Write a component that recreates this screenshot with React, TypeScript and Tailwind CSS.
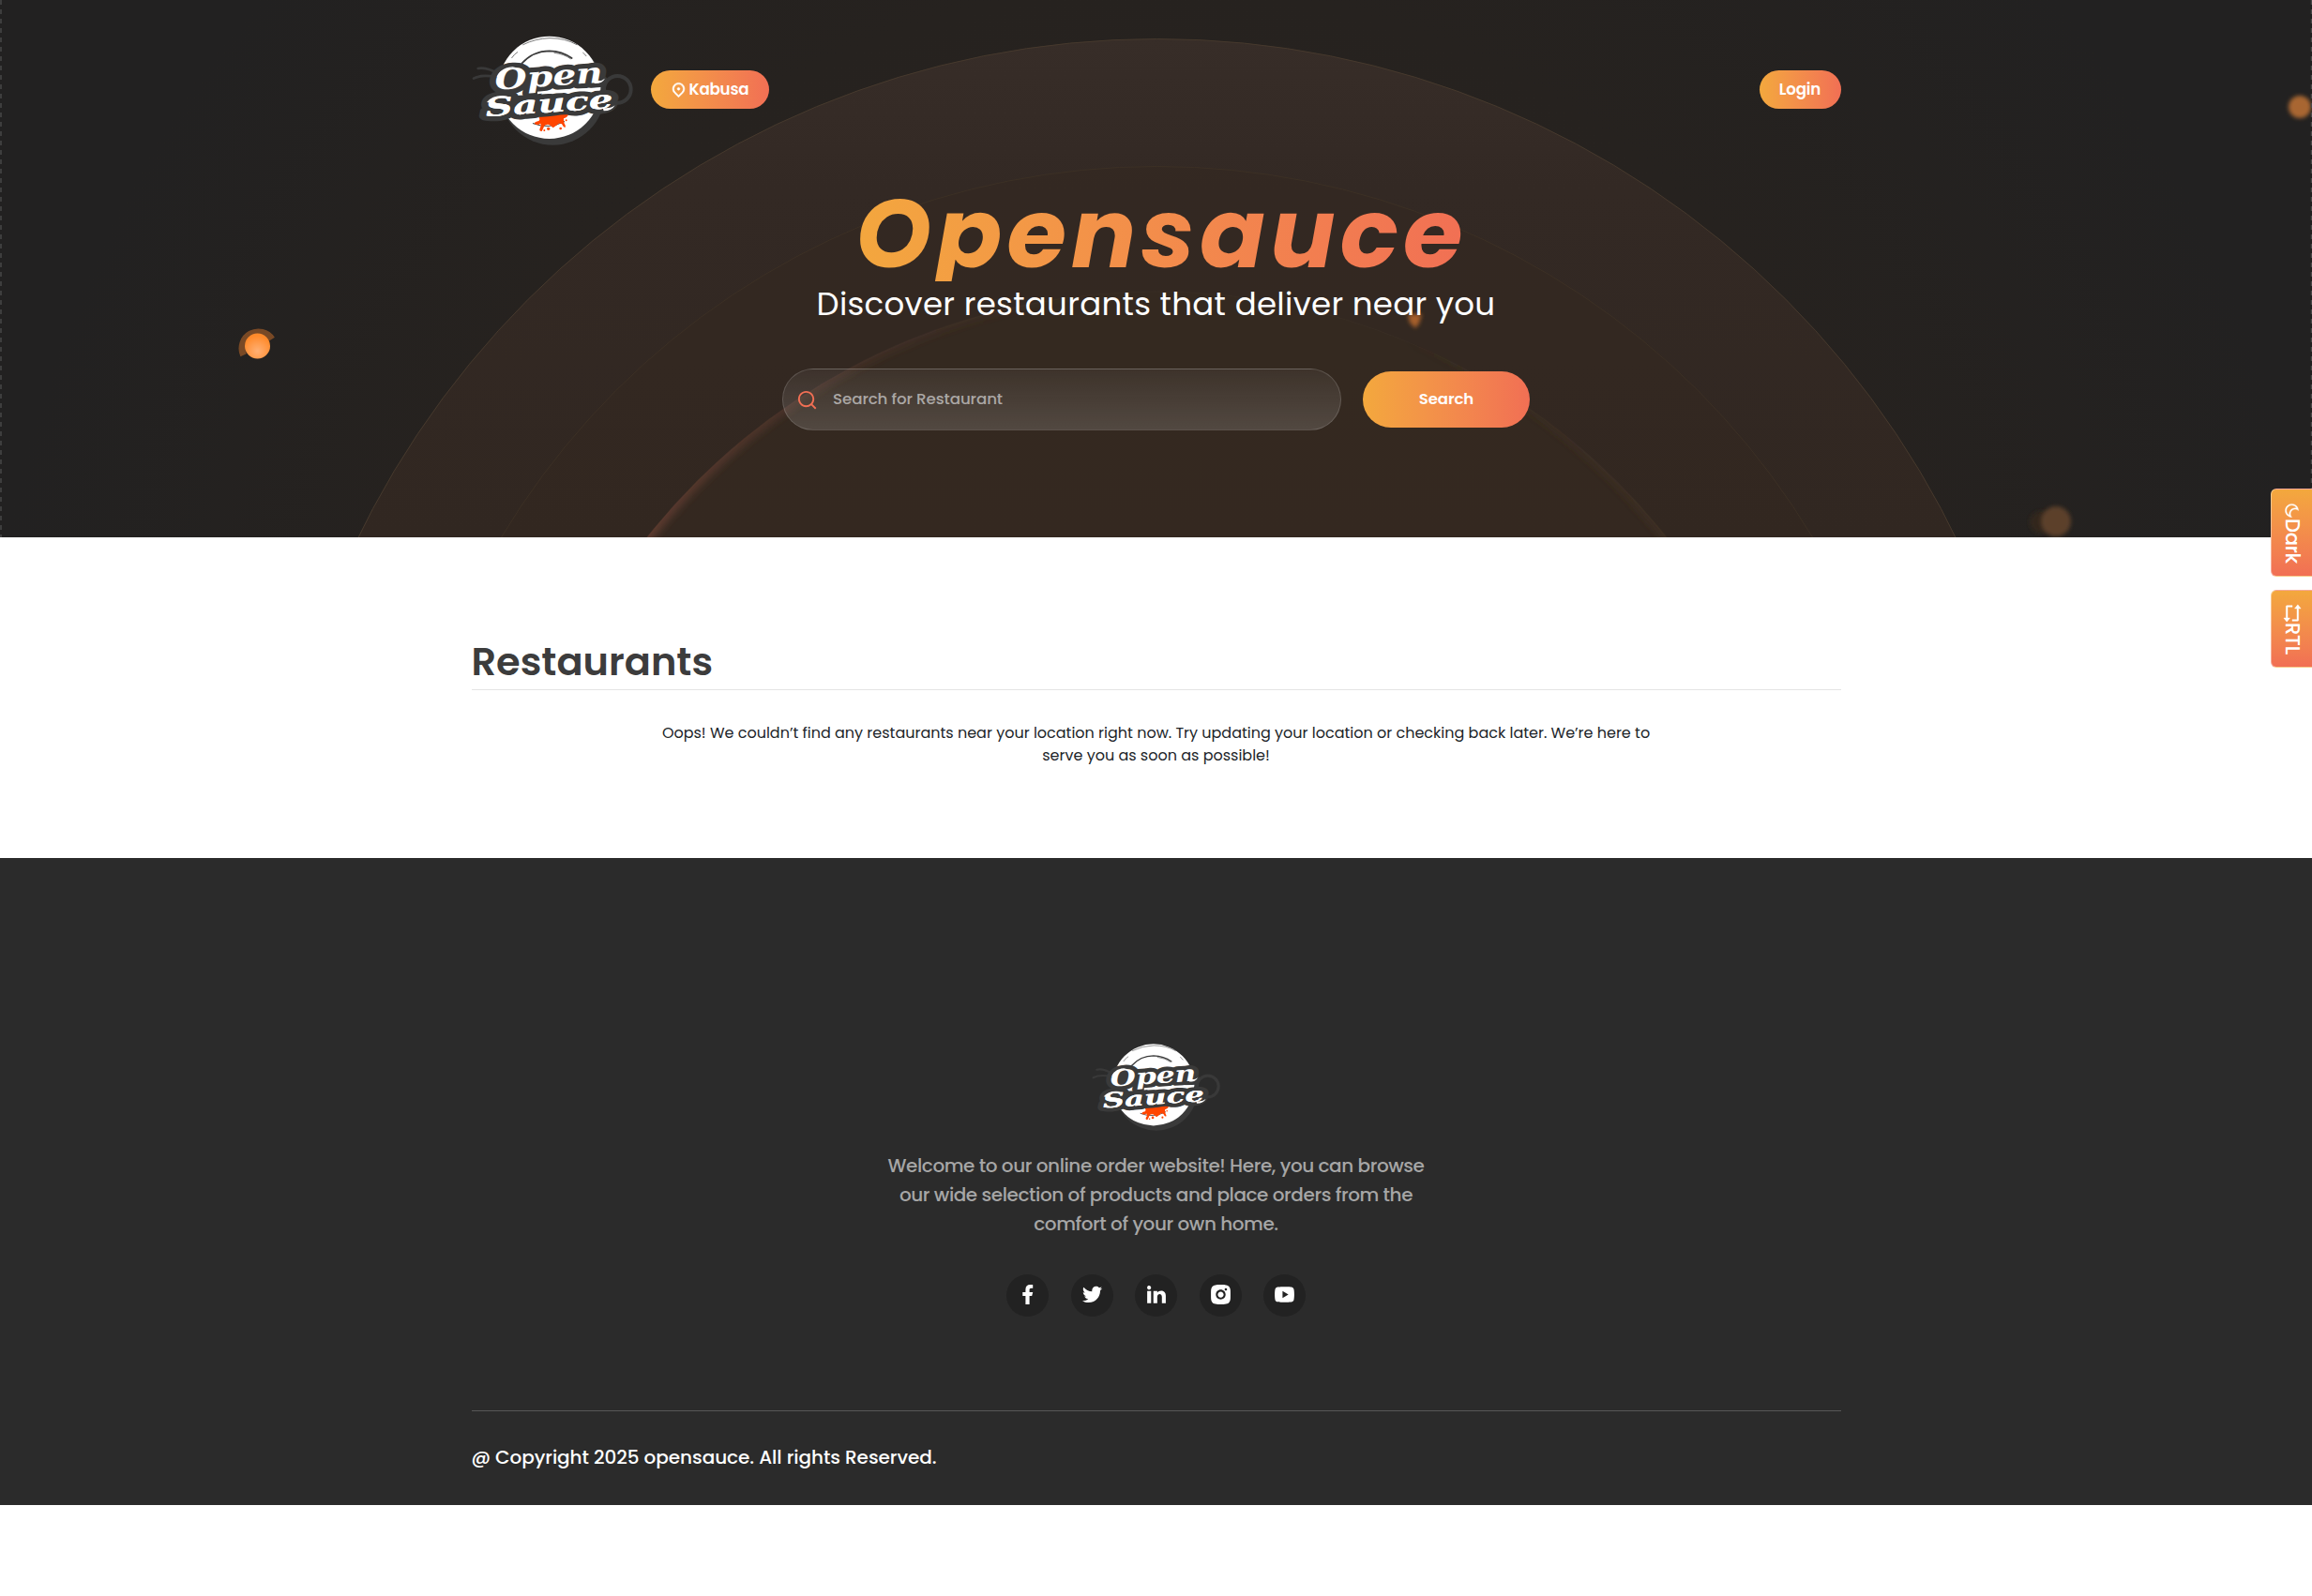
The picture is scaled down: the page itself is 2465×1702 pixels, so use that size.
import {
  RiFacebookFill,
  RiInstagramFill,
  RiLinkedinFill,
  RiMapPin2Line,
  RiMoonLine,
  RiRepeatLine,
  RiSearchLine,
  RiTwitterFill,
  RiYoutubeFill,
} from "react-icons/ri";

const socials = [
  { name: "Facebook", Icon: RiFacebookFill },
  { name: "Twitter", Icon: RiTwitterFill },
  { name: "LinkedIn", Icon: RiLinkedinFill },
  { name: "Instagram", Icon: RiInstagramFill },
  { name: "YouTube", Icon: RiYoutubeFill },
];

function Logo({ className }: { className: string }) {
  return (
    <svg viewBox="36 50 516 354" className={className} role="img" aria-label="Open Sauce">
      <circle cx="295" cy="236" r="167" fill="#3a3a3a" />
      <g fill="none" stroke="#393939" strokeLinecap="round">
        <circle cx="502" cy="225" r="43" strokeWidth="12" />
        <path d="M56 158 Q84 152 122 176" strokeWidth="8" />
        <path d="M42 190 Q70 176 112 186" strokeWidth="8" />
      </g>
      <circle cx="284" cy="219" r="164" fill="#fff" />
      <g fill="none" stroke="#3a3a3a" strokeLinecap="round">
        <path d="M196 142 Q232 102 284 102 Q325 103 356 125" strokeWidth="5" />
        <path d="M300 108 Q332 112 352 127" strokeWidth="2" />
        <path d="M200 82 Q240 62 285 61 Q335 61 372 82" strokeWidth="2" />
        <path d="M164 124 Q172 112 182 106" strokeWidth="2" />
        <path d="M392 108 Q400 114 402 118" strokeWidth="2" />
        <path d="M232 334 Q282 354 332 328" strokeWidth="3" />
      </g>
      <g
        fontFamily="'DejaVu Serif', 'Liberation Serif', serif"
        fontWeight="700"
        fontStyle="italic"
        strokeLinejoin="round"
      >
        <g fill="#3a3a3a" stroke="#3a3a3a" strokeWidth="30">
          <path d="M130 190 L150 162 L180 190 L440 165 L445 190 L200 212 Z" />
          <path d="M92 300 L96 262 L455 250 L478 276 L330 292 Z" />
        </g>
        <g fill="#fff" stroke="#3a3a3a" strokeWidth="32" paintOrder="stroke">
          <text x="82" y="312" fontSize="82" textLength="408" lengthAdjust="spacingAndGlyphs" transform="rotate(-4 82 312)">
            Sauce
          </text>
          <text x="112" y="226" fontSize="90" textLength="346" lengthAdjust="spacingAndGlyphs" transform="rotate(-4 112 226)">
            Open
          </text>
        </g>
        <g fill="#fff">
          <text x="82" y="312" fontSize="82" textLength="408" lengthAdjust="spacingAndGlyphs" transform="rotate(-4 82 312)" aria-hidden="true">
            Sauce
          </text>
        </g>
        <path d="M246 232 Q330 221 446 220 L446 229 Q340 226 246 240 Z" fill="#fff" />
        <path d="M116 184 Q130 152 176 152 Q140 160 128 190 Z" fill="#fff" />
        <path d="M84 266 Q104 240 150 246 Q112 250 98 268 Z" fill="#fff" />
        <path d="M425 196 Q448 202 462 190 Q452 208 428 206 Z" fill="#fff" />
        <path d="M455 284 Q480 288 494 276 Q484 294 458 294 Z" fill="#fff" />
      </g>
      <path
        d="M250 314 Q282 312 306 309 Q326 304 344 306 Q344 314 330 318 Q330 328 332 334 Q338 342 334 347 Q328 345 324 336 Q314 330 310 338 Q302 344 296 348 Q290 342 284 338 Q272 336 268 342 Q264 352 260 359 Q250 359 254 350 Q260 342 256 334 Q246 342 236 334 Q238 328 250 326 Q256 322 250 314 Z"
        fill="#ff4500"
      />
      <g fill="#ff4500">
        <circle cx="281" cy="351" r="5" />
        <circle cx="268" cy="356" r="3" />
        <circle cx="320" cy="350" r="4" />
        <circle cx="338" cy="324" r="3" />
      </g>
    </svg>
  );
}

function HeroBackdrop() {
  return (
    <svg viewBox="0 0 2465 573" className="absolute inset-0 h-full w-full" aria-hidden="true">
      <defs>
        <radialGradient id="base" gradientUnits="userSpaceOnUse" cx="1233" cy="800" r="1250">
          <stop offset="0" stopColor="#2c2420" />
          <stop offset="0.65" stopColor="#26221f" />
          <stop offset="1" stopColor="#222121" />
        </radialGradient>
        <linearGradient id="disc" gradientUnits="userSpaceOnUse" x1="0" y1="42" x2="0" y2="573">
          <stop offset="0" stopColor="#372d28" />
          <stop offset="0.3" stopColor="#332924" />
          <stop offset="1" stopColor="#312721" />
        </linearGradient>
        <linearGradient id="rimLeft" gradientUnits="userSpaceOnUse" x1="690" y1="573" x2="1180" y2="310">
          <stop offset="0" stopColor="#7c483a" stopOpacity="0.6" />
          <stop offset="0.6" stopColor="#5e3b30" stopOpacity="0.25" />
          <stop offset="1" stopColor="#5e3b30" stopOpacity="0" />
        </linearGradient>
        <linearGradient id="rimRight" gradientUnits="userSpaceOnUse" x1="1775" y1="573" x2="1500" y2="350">
          <stop offset="0" stopColor="#453525" stopOpacity="0.6" />
          <stop offset="1" stopColor="#453525" stopOpacity="0" />
        </linearGradient>
        <radialGradient id="ember" cx="0.5" cy="0.7" r="0.6">
          <stop offset="0" stopColor="#ffb074" />
          <stop offset="1" stopColor="#ff8a2b" />
        </radialGradient>
        <filter id="soft2" x="-50%" y="-50%" width="200%" height="200%">
          <feGaussianBlur stdDeviation="2" />
        </filter>
        <filter id="soft4" x="-20%" y="-20%" width="140%" height="140%">
          <feGaussianBlur stdDeviation="4" />
        </filter>
        <clipPath id="inner">
          <circle cx="1233.5" cy="1004" r="694" />
        </clipPath>
      </defs>
      <rect width="2465" height="573" fill="url(#base)" />
      <circle cx="1233.5" cy="989.5" r="948" fill="url(#disc)" stroke="#46392d" strokeWidth="1" />
      <circle cx="1233.5" cy="993" r="815.5" fill="#332820" fillOpacity="0.5" stroke="#3c3025" strokeWidth="1" />
      <circle cx="1233.5" cy="1004" r="693" fill="#352920" fillOpacity="0.5" stroke="#382d24" strokeWidth="1" />
      <g clipPath="url(#inner)">
        <path d="M539.5 1004 A694 694 0 0 1 1233.5 310" fill="none" stroke="url(#rimLeft)" strokeWidth="12" filter="url(#soft4)" />
        <path d="M1233.5 310 A694 694 0 0 1 1927.5 1004" fill="none" stroke="url(#rimRight)" strokeWidth="10" filter="url(#soft4)" />
      </g>
      <path d="M259.6 378.7 A17.5 17.5 0 0 1 290 361.6" fill="none" stroke="#a85f28" strokeOpacity="0.65" strokeWidth="7" />
      <circle cx="274.5" cy="369" r="13.5" fill="url(#ember)" />
      <circle cx="2452" cy="114" r="12" fill="#a86631" filter="url(#soft2)" />
      <path d="M1501 335 H1516 L1513 345 L1509 350 L1503 344 Z" fill="#a55f29" filter="url(#soft2)" />
      <circle cx="2176" cy="557" r="12" fill="#32271f" filter="url(#soft2)" />
      <circle cx="2192" cy="556" r="16" fill="#5c3f2a" filter="url(#soft2)" />
      <path d="M1 0V573 M2464.5 0V573" stroke="#484848" strokeWidth="1.5" strokeDasharray="5 5" />
    </svg>
  );
}

export default function App() {
  return (
    <div className="min-h-[1702px] bg-white font-['Poppins','Inter',sans-serif]">
      <section className="relative h-[573px] overflow-hidden">
        <HeroBackdrop />
        <div className="relative mx-auto w-[1460px]">
          <header className="flex h-[191px] items-center justify-between">
            <div className="flex items-center gap-[19px]">
              <Logo className="h-[118px] w-[172px]" />
              <button className="flex h-[41px] w-[126px] items-center justify-center gap-[3px] rounded-full bg-linear-to-r from-[#f3a83d] to-[#f16f54] text-[16.7px] font-semibold tracking-[-0.2px] text-white">
                <RiMapPin2Line className="size-[17px]" strokeWidth="0.8" />
                Kabusa
              </button>
            </div>
            <button className="h-[41px] w-[87px] rounded-full bg-linear-to-r from-[#f3a83d] to-[#f16f54] text-[16.7px] font-semibold tracking-[-0.2px] text-white">
              Login
            </button>
          </header>
          <div className="mt-[7px] flex flex-col items-center">
            <h1 className="bg-linear-to-r from-[#f3a83d] to-[#f16f54] bg-clip-text pr-0.5 pl-3.5 text-[103px] leading-[102px] font-bold tracking-[5.1px] text-transparent italic">
              Opensauce
            </h1>
            <p className="text-[34px] leading-[49px] tracking-[0.3px] text-white">
              Discover restaurants that deliver near you
            </p>
            <form className="mt-[44px] flex items-center gap-[23px]">
              <label className="flex h-[66px] w-[596px] items-center rounded-full border border-white/15 bg-linear-to-b from-white/5 to-white/15 pl-3.5 text-[16.7px] font-medium tracking-[-0.1px] text-[#aba7a5]">
                <RiSearchLine className="mr-4 size-[23px] text-[#f16f54]" />
                Search for Restaurant
              </label>
              <button
                type="button"
                className="h-[60px] w-[178px] rounded-full bg-linear-to-r from-[#f3a83d] to-[#f16f54] text-[16.5px] font-semibold tracking-[-0.1px] text-white"
              >
                Search
              </button>
            </form>
          </div>
        </div>
      </section>

      <main className="mx-auto h-[342px] w-[1460px] pt-[101px]">
        <h2 className="h-[62px] border-b border-[#e4e4e4] text-[41.5px] leading-[63px] font-semibold text-[#3c3c3c]">
          Restaurants
        </h2>
        <p className="mx-auto mt-[34px] w-[1095px] text-center text-base leading-6 text-[#212529]">
          Oops! We couldn’t find any restaurants near your location right now. Try updating your location or checking
          back later. We’re here to serve you as soon as possible!
        </p>
      </main>

      <footer className="h-[690px] bg-[#2b2b2b] pt-[197px]">
        <div className="mx-auto flex w-[1460px] flex-col">
          <div className="flex h-[393px] flex-col items-center border-b border-[#575757]">
            <Logo className="h-[94px] w-[137px]" />
            <p className="mt-[22px] w-[590px] text-center text-[20px] leading-[31px] font-medium tracking-[-0.43px] text-[#a6a6a6]">
              Welcome to our online order website! Here, you can browse our wide selection of products and place orders
              from the comfort of your own home.
            </p>
            <nav className="mt-[38px] flex gap-[23.5px]">
              {socials.map(({ name, Icon }) => (
                <a
                  key={name}
                  href="#"
                  aria-label={name}
                  className="flex size-[45px] items-center justify-center rounded-full bg-[#222] pb-0.5"
                >
                  <Icon className="size-[25px] text-white" />
                </a>
              ))}
            </nav>
          </div>
          <p className="mt-[34px] text-[20px] leading-[30px] font-medium tracking-[-0.06px] text-white">
            @ Copyright 2025 opensauce. All rights Reserved.
          </p>
        </div>
      </footer>

      <aside className="absolute top-[521px] right-0 flex flex-col gap-3.5">
        <button className="flex h-[94px] w-11 flex-col items-center rounded-l-md border border-r-0 border-white/40 bg-linear-to-b from-[#f3a83d] to-[#f16f54] pt-3.5 text-white">
          <RiMoonLine className="size-[17px] rotate-90" strokeWidth="0.5" />
          <span className="text-[21px] leading-[42px] font-medium tracking-[-0.2px] [writing-mode:vertical-rl]">Dark</span>
        </button>
        <button className="flex h-[83px] w-11 flex-col items-center rounded-l-md border border-r-0 border-white/40 bg-linear-to-b from-[#f3a83d] to-[#f16f54] pt-3.5 text-white">
          <RiRepeatLine className="size-[20px] rotate-90" strokeWidth="0.5" />
          <span className="text-[21px] leading-[42px] font-medium tracking-[-0.2px] [writing-mode:vertical-rl]">RTL</span>
        </button>
      </aside>
    </div>
  );
}
